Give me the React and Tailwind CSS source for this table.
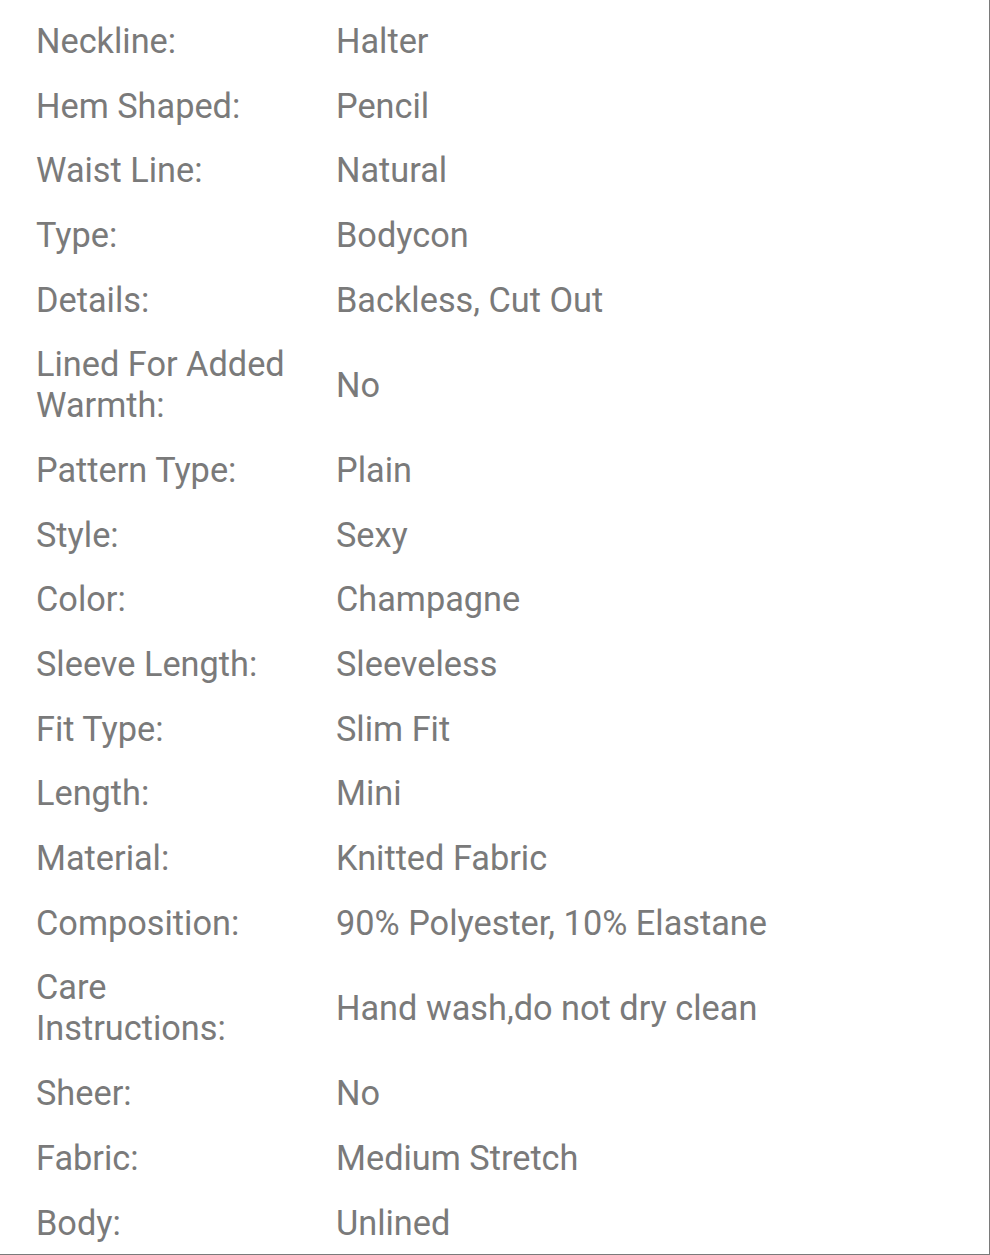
import React from 'react';

const specs = [
  ['Neckline:', 'Halter'],
  ['Hem Shaped:', 'Pencil'],
  ['Waist Line:', 'Natural'],
  ['Type:', 'Bodycon'],
  ['Details:', 'Backless, Cut Out'],
  ['Lined For Added Warmth:', 'No'],
  ['Pattern Type:', 'Plain'],
  ['Style:', 'Sexy'],
  ['Color:', 'Champagne'],
  ['Sleeve Length:', 'Sleeveless'],
  ['Fit Type:', 'Slim Fit'],
  ['Length:', 'Mini'],
  ['Material:', 'Knitted Fabric'],
  ['Composition:', '90% Polyester, 10% Elastane'],
  ['Care Instructions:', 'Hand wash,do not dry clean'],
  ['Sheer:', 'No'],
  ['Fabric:', 'Medium Stretch'],
  ['Body:', 'Unlined'],
];

const App = () => {
  return (
    <div className="w-[990px] h-[1255px] bg-white overflow-hidden">
      <div className="w-[990px] h-[1255px] border-r border-b border-[#7a7a7a] pt-[9px]">
        {/* Product attribute table */}
        <div className="grid grid-cols-[258px_1fr] gap-x-[42px] pl-9 text-[34.3px] leading-[41px] text-[#7a7a7a] font-['Roboto',sans-serif]">
          {specs.map(([label, value]) => (
            <React.Fragment key={label}>
              <div className="py-[11.85px]">{label}</div>
              <div className="py-[11.85px] flex items-center">{value}</div>
            </React.Fragment>
          ))}
        </div>
      </div>
    </div>
  );
};

export default App;
